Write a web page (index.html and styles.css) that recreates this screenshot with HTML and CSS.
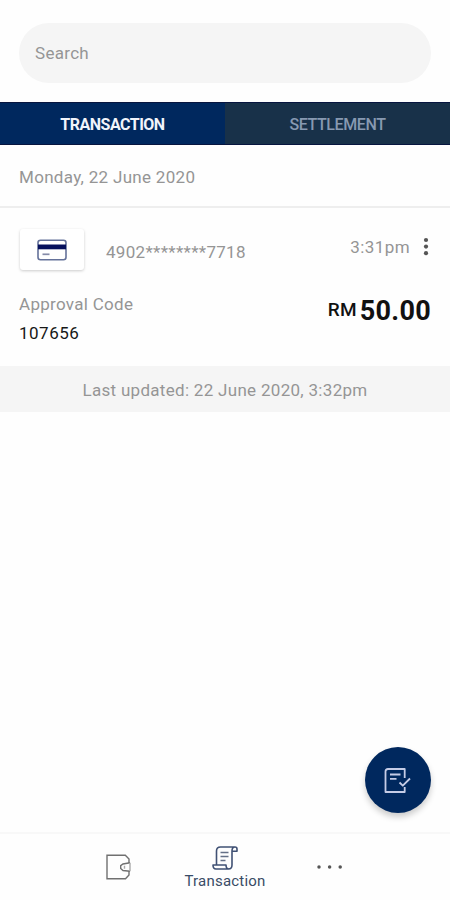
FILE: index.html
```html
<!DOCTYPE html>
<html lang="en">
<head>
<meta charset="utf-8">
<meta name="viewport" content="width=device-width, initial-scale=1">
<title>Transactions</title>
<link rel="stylesheet" href="styles.css">
</head>
<body>
<div class="app">
  <header class="search-area"><div class="search"><span>Search</span></div></header>
  <div class="tabs">
    <div class="tab active"><span class="tab-main">TRANSACTION</span></div>
    <div class="tab"><span class="tab-alt">SETTLEMENT</span></div>
  </div>
  <main class="content">
    <div class="date"><span class="date-text">Monday, 22 June 2020</span></div>
    <section class="transaction">
      <div class="summary">
        <div class="card-tile">
          <svg width="30" height="22" viewBox="0 0 30 22" fill="none">
            <rect x="1" y="1.2" width="28" height="19.6" rx="2.5" stroke="#65729a" stroke-width="1.6"/>
            <path d="M1 5.5h28v4.8H1z" fill="#06105c"/>
            <path d="M5.5 15.3h7" stroke="#858ba8" stroke-width="1.7"/>
          </svg>
        </div>
        <span class="number">4902********7718</span>
        <span class="time">3:31pm</span>
        <svg class="more" width="6" height="20" viewBox="0 0 6 20" fill="#555"><circle cx="3" cy="3" r="2.1"/><circle cx="3" cy="9.6" r="2.1"/><circle cx="3" cy="16.2" r="2.1"/></svg>
      </div>
      <div class="details">
        <div class="approval"><div><span class="approval-label">Approval Code</span></div><div class="code"><span class="code-text">107656</span></div></div>
        <div class="amount"><span class="currency">RM</span><span class="value">50.00</span></div>
      </div>
    </section>
    <div class="updated"><span class="updated-text">Last updated: 22 June 2020, 3:32pm</span></div>
  </main>
  <nav class="nav">
    <div class="nav-item wallet">
      <svg width="28" height="26" viewBox="0 0 28 26" fill="none" stroke="#707070" stroke-width="1.4">
        <path d="M25 9V5L21.3 1.3H3V24.7H21.5L25 21V17"/>
        <path d="M26 8.7L19 10L16.7 11.7V14.5L19 16.5L26 17.3"/><path d="M26 8.7v8.6M20.5 11.7v3" stroke="#aaa"/>
      </svg>
    </div>
    <div class="nav-item selected">
      <svg width="28" height="26" viewBox="0 0 28 26" fill="none" stroke="#405174" stroke-width="1.6" stroke-linejoin="round">
        <path d="M5.5 19.5V6Q5.5 2 9.5 2H24Q21 2 21 6V20Q21 24 17.5 24H5Q2 24 2 20H15Q15 24 18 24M21 6.3H26V4Q26 2 24 2"/>
        <path d="M9.5 7.5h8M9.5 11.5h8M9.5 15.5h5" stroke="#647087"/>
      </svg>
      <span class="nav-label">Transaction</span>
    </div>
    <div class="nav-item dots">
      <svg width="28" height="6" viewBox="0 0 28 6" fill="#555"><circle cx="3" cy="3" r="1.75"/><circle cx="13.6" cy="3" r="1.75"/><circle cx="24.2" cy="3" r="1.75"/></svg>
    </div>
  </nav>
  <div class="fab">
    <svg width="28" height="28" viewBox="0 0 28 28" fill="none" stroke="#c5cce6" stroke-width="1.8" stroke-linejoin="round">
      <path d="M20.7 12V3H4Q1.5 3 1.5 5.5V26H20.7V21"/><path d="M6 8.5H16.5M6 12.8H12.5M15.5 16.5L18.8 19.7L26 12.5"/>
    </svg>
  </div>
</div>
</body>
</html>
```
FILE: styles.css
```css
* { box-sizing: border-box; }
body { margin: 0; background: #fefefe; color: #959595; font: 17px/20px Roboto, "Noto Sans", sans-serif; letter-spacing: 0.3px; }
svg { display: block; flex-shrink: 0; }
.app { position: relative; height: 900px; display: flex; flex-direction: column; overflow: hidden; }
.search-area { height: 102px; padding: 23px 19px 0; }
.search { height: 60px; padding: 0 16px; border-radius: 30px; background: #f5f5f5; display: flex; align-items: center; }
.tabs { height: 43px; display: flex; background: #183149; border-top: 1px solid #07153f; border-bottom: 1px solid #07153f; }
.tab { width: 50%; display: flex; align-items: center; justify-content: center; padding-top: 2px; font-size: 16px; font-weight: 500; letter-spacing: -0.4px; color: #8799b1; }
.tab.active { background: #00285e; color: #f1f4fb; font-weight: 700; letter-spacing: -0.5px; }
.content { flex: 1; }
.date { height: 63px; padding: 2px 19px 0; display: flex; align-items: center; border-bottom: 2px solid #eee; }
.transaction { height: 158px; padding: 21px 19px 0; }
.summary { display: flex; align-items: flex-start; height: 63px; }
.card-tile { width: 64px; height: 41px; margin-left: 1px; display: flex; align-items: center; justify-content: center; border-radius: 3px; background: #fff; box-shadow: 0 1px 3px #0003; }
.number { margin: 13px 0 0 22px; }
.time { margin: 8px 13px 0 auto; letter-spacing: 0.4px; }
.more { margin: 8px 2px 0 0; }
.details { display: flex; justify-content: space-between; padding-top: 2px; }
.code { margin-top: 9px; color: #171717; letter-spacing: 0.5px; }
.amount { display: flex; align-items: flex-start; gap: 3px; margin-top: 2px; color: #111; line-height: 30px; }
.currency { margin-top: -1px; font-size: 19px; font-weight: 500; letter-spacing: 0.2px; }
.value { font-size: 27px; font-weight: 700; letter-spacing: 0.3px; }
.updated { height: 46px; background: #f5f5f5; display: flex; align-items: center; justify-content: center; padding-top: 2px; }
.nav { height: 68px; border-top: 2px solid #f8f8f8; display: grid; grid-template-columns: 104px 60px 122px 30px 134px; }
.nav-item { display: flex; flex-direction: column; }
.wallet { grid-column: 2; padding-top: 20px; }
.selected { grid-column: 3; align-items: center; padding-top: 11px; color: #394c66; font-size: 15px; line-height: 18px; }
.nav-label { margin-top: 1px; letter-spacing: 0.2px; }
.dots { grid-column: 4; padding-top: 30px; margin-left: 30px; }
.fab { position: absolute; right: 19px; bottom: 87px; width: 66px; height: 66px; border-radius: 50%; background: #00285e; display: flex; align-items: center; justify-content: center; box-shadow: 0 4px 6px #0003; }
```
